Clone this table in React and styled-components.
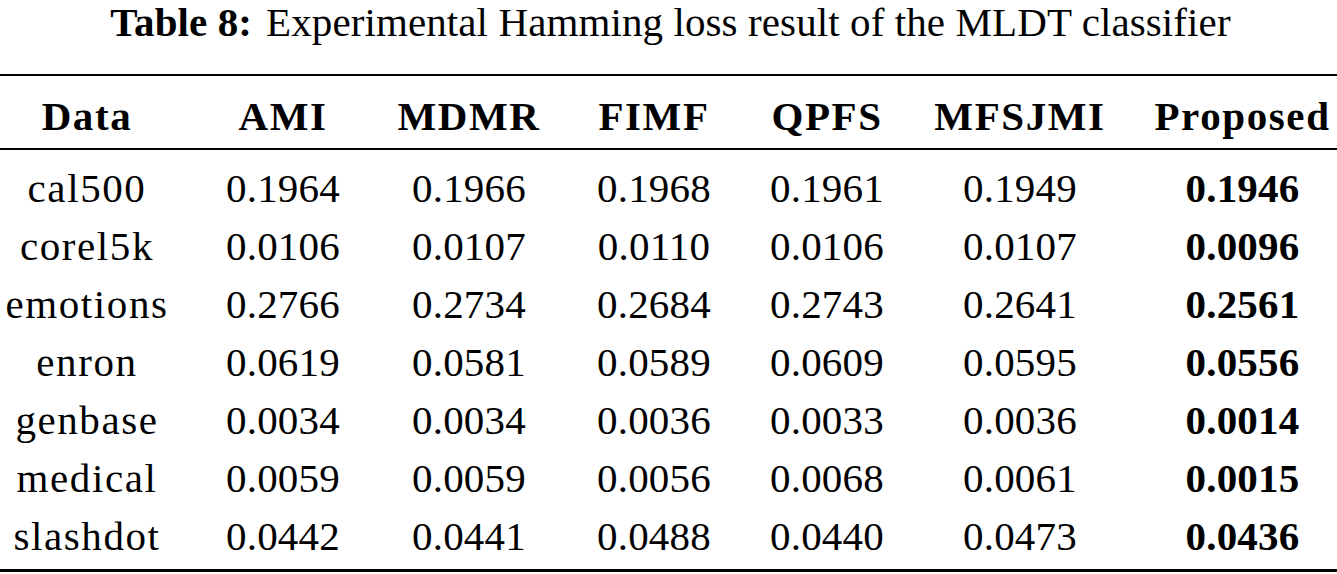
import React from "react";
import styled, { createGlobalStyle } from "styled-components";

const Global = createGlobalStyle`
  html, body { margin: 0; padding: 0; background: #fff; }
  body { font-family: "Liberation Serif", "Times New Roman", serif; color: #000; }
`;

const Page = styled.div`
  width: 1337px;
  height: 574px;
  overflow: hidden;
  background: #fff;
`;

const Caption = styled.div`
  display: flex;
  justify-content: center;
  align-items: flex-start;
  font-size: 41px;
  line-height: 44px;
  height: 72px;
  box-sizing: border-box;
  padding-left: 4px;
  letter-spacing: 0.1px;
  white-space: nowrap;
`;

const CapLabel = styled.span`
  font-weight: 700;
  margin-right: 14px;
`;

const Table = styled.div`
  border-top: 2px solid #000;
  border-bottom: 3px solid #000;
  margin-top: 2px;
`;

const cols = "174px 218px 154px 216px 130px 256px 189px";

const HeadRow = styled.div`
  display: grid;
  grid-template-columns: ${cols};
  height: 72px;
  align-items: center;
  border-bottom: 2px solid #000;
  font-weight: 700;
`;

const Body = styled.div`
  padding: 9px 0 4px;
`;

const Row = styled.div`
  display: grid;
  grid-template-columns: ${cols};
  height: 58px;
  align-items: center;
`;

const Cell = styled.div`
  text-align: center;
  font-size: 41px;
  line-height: 46px;
  white-space: nowrap;
  font-weight: ${(p) => (p.$bold ? 700 : "inherit")};
  letter-spacing: ${(p) => (p.$num ? "0.2px" : "1.6px")};
  padding-top: ${(p) => (p.$head ? "7px" : "0")};
`;

const headers = ["Data", "AMI", "MDMR", "FIMF", "QPFS", "MFSJMI", "Proposed"];

const rows = [
  ["cal500", "0.1964", "0.1966", "0.1968", "0.1961", "0.1949", "0.1946"],
  ["corel5k", "0.0106", "0.0107", "0.0110", "0.0106", "0.0107", "0.0096"],
  ["emotions", "0.2766", "0.2734", "0.2684", "0.2743", "0.2641", "0.2561"],
  ["enron", "0.0619", "0.0581", "0.0589", "0.0609", "0.0595", "0.0556"],
  ["genbase", "0.0034", "0.0034", "0.0036", "0.0033", "0.0036", "0.0014"],
  ["medical", "0.0059", "0.0059", "0.0056", "0.0068", "0.0061", "0.0015"],
  ["slashdot", "0.0442", "0.0441", "0.0488", "0.0440", "0.0473", "0.0436"],
];

export default function App() {
  return (
    <Page>
      <Global />
      <Caption>
        <CapLabel>Table 8:</CapLabel>
        <span>Experimental Hamming loss result of the MLDT classifier</span>
      </Caption>
      <Table>
        <HeadRow>
          {headers.map((h) => (
            <Cell key={h} $head>
              {h}
            </Cell>
          ))}
        </HeadRow>
        <Body>
          {rows.map((r) => (
            <Row key={r[0]}>
              {r.map((v, i) => (
                <Cell key={i} $num={i > 0} $bold={i === 6}>
                  {v}
                </Cell>
              ))}
            </Row>
          ))}
        </Body>
      </Table>
    </Page>
  );
}
